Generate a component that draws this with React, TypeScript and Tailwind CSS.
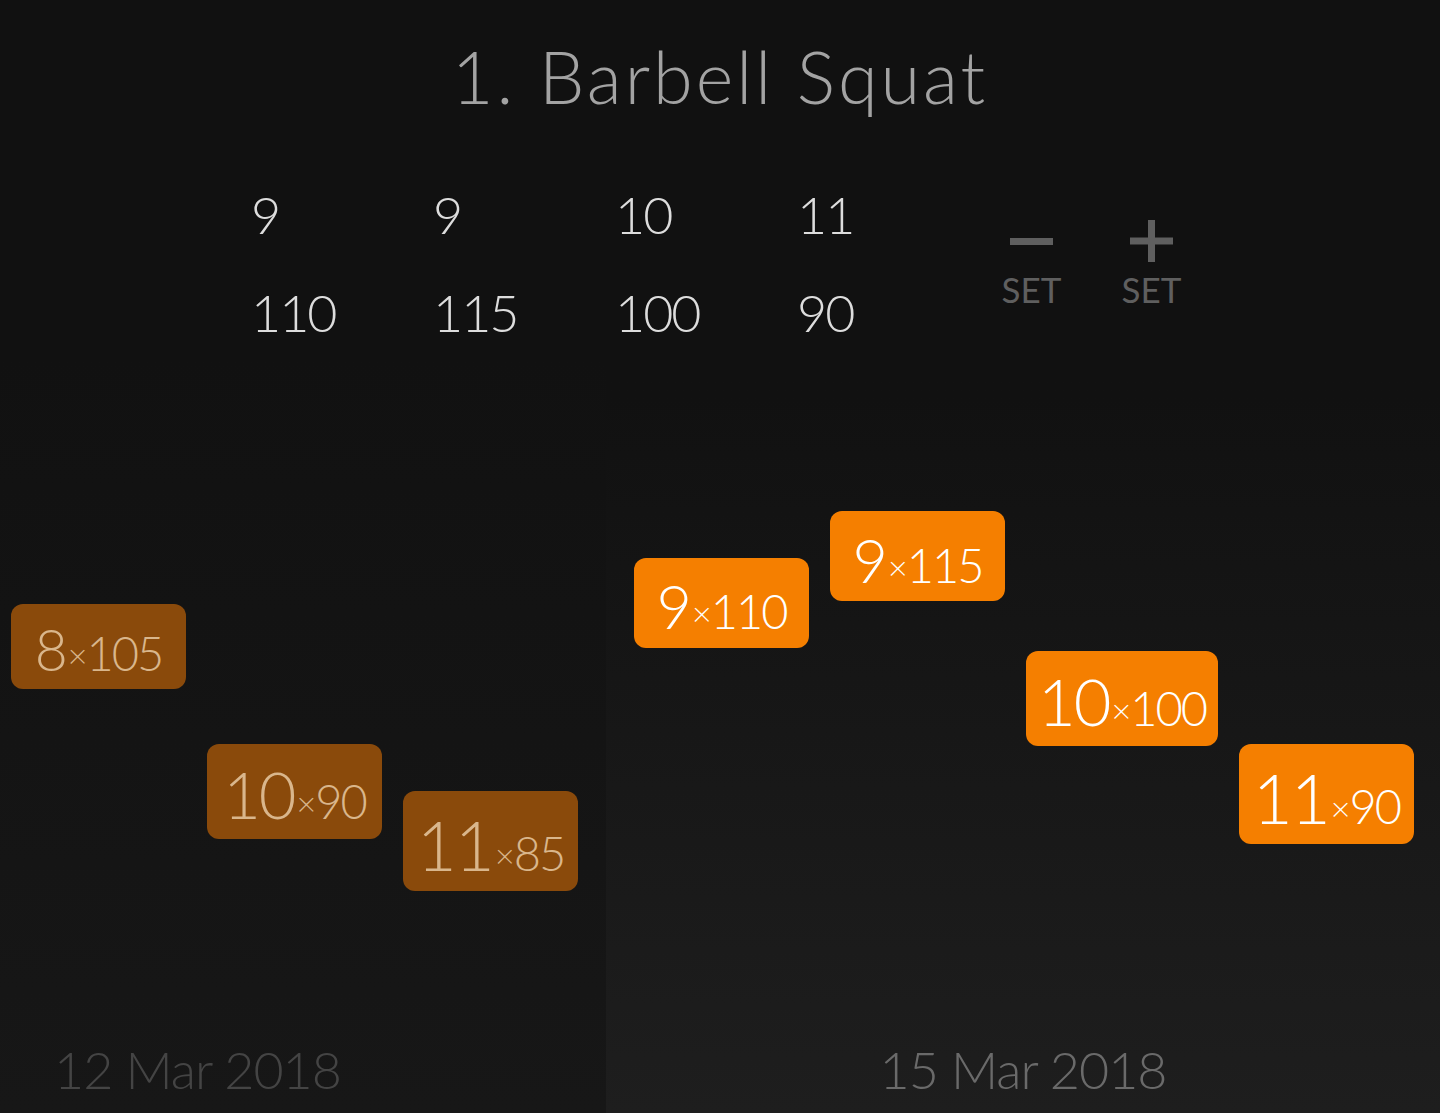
import React from 'react';

type Set = { reps: number; weight: number };

const planned: Set[] = [
  { reps: 9, weight: 110 },
  { reps: 9, weight: 115 },
  { reps: 10, weight: 100 },
  { reps: 11, weight: 90 },
];

const sessions = [
  {
    date: '12 Mar 2018',
    past: true,
    sets: [
      { reps: 8, weight: 105 },
      { reps: 10, weight: 90 },
      { reps: 11, weight: 85 },
    ],
  },
  {
    date: '15 Mar 2018',
    past: false,
    sets: planned,
  },
];

const font = { fontFamily: 'Lato, "DejaVu Sans", sans-serif' };

function Chip({ set, past }: { set: Set; past: boolean }) {
  // vertical place and size come from the data
  const top = 151 + ((115 - set.weight) * 28) / 3;
  const height = 45 + 5 * set.reps;
  return (
    <div
      className={
        'shrink-0 min-w-[175px] px-3 rounded-[12px] flex items-center justify-center ' +
        (past ? 'bg-[#8a4a0b] text-[#d9b68c]' : 'bg-[#f57f00] text-white')
      }
      style={{ marginTop: top, height }}
    >
      <span className="flex items-baseline font-light leading-none pt-[6px] tracking-[-2px]">
        <span style={{ fontSize: 25 + 4 * set.reps }}>{set.reps}</span>
        <span className="text-[34px] ml-[2px] mr-[1px] relative -top-[3px]">×</span>
        <span className="text-[47px]">{set.weight}</span>
      </span>
    </div>
  );
}

export default function App() {
  return (
    <div className="w-[1440px] h-[1113px] bg-[#111111] flex flex-col overflow-hidden" style={font}>
      <h1 className="h-[116px] text-center text-[72px] font-light text-[#a3a3a3] leading-none pt-[40px] tracking-[3px]">
        1. Barbell Squat
      </h1>

      <div className="flex pl-[251px] pt-[72px] h-[244px]">
        {planned.map((s, i) => (
          <div
            key={i}
            className="w-[182px] flex flex-col text-[52px] font-light text-[#dddddd] leading-none tracking-[-2px]"
          >
            <span>{s.reps}</span>
            <span className="mt-[46px]">{s.weight}</span>
          </div>
        ))}
        <div className="flex gap-[57px] ml-[21px] pt-[32px]">
          <div className="w-[63px] flex flex-col items-center text-[#5f5f5f]">
            <div className="h-[42px] flex items-center">
              <div className="w-[43px] h-[7px] bg-[#5f5f5f]" />
            </div>
            <span className="text-[35px] leading-none mt-[10px]">SET</span>
          </div>
          <div className="w-[63px] flex flex-col items-center text-[#5f5f5f]">
            <svg width="43" height="42" viewBox="0 0 43 42">
              <rect x="0" y="17.5" width="43" height="7" fill="#5f5f5f" />
              <rect x="18" y="0" width="7" height="42" fill="#5f5f5f" />
            </svg>
            <span className="text-[35px] leading-none mt-[10px]">SET</span>
          </div>
        </div>
      </div>

      <div className="flex flex-1">
        {sessions.map((s) => (
          <div
            key={s.date}
            className={
              'flex flex-col ' +
              (s.past
                ? 'w-[606px] bg-linear-to-b from-[#111111] to-[#171717]'
                : 'flex-1 bg-linear-to-b from-[#111111] from-[5%] to-[#1e1e1e]')
            }
          >
            <div className={'flex flex-1 items-start gap-[21px] ' + (s.past ? 'pl-[11px]' : 'pl-[28px]')}>
              {s.sets.map((set, i) => (
                <Chip key={i} set={set} past={s.past} />
              ))}
            </div>
            <div
              className={
                'text-[52px] font-light leading-none pb-[18px] tracking-[-1px] ' +
                (s.past ? 'pl-[54px] text-[#444444]' : 'text-center text-[#6a6a6a]')
              }
            >
              {s.date}
            </div>
          </div>
        ))}
      </div>
    </div>
  );
}
